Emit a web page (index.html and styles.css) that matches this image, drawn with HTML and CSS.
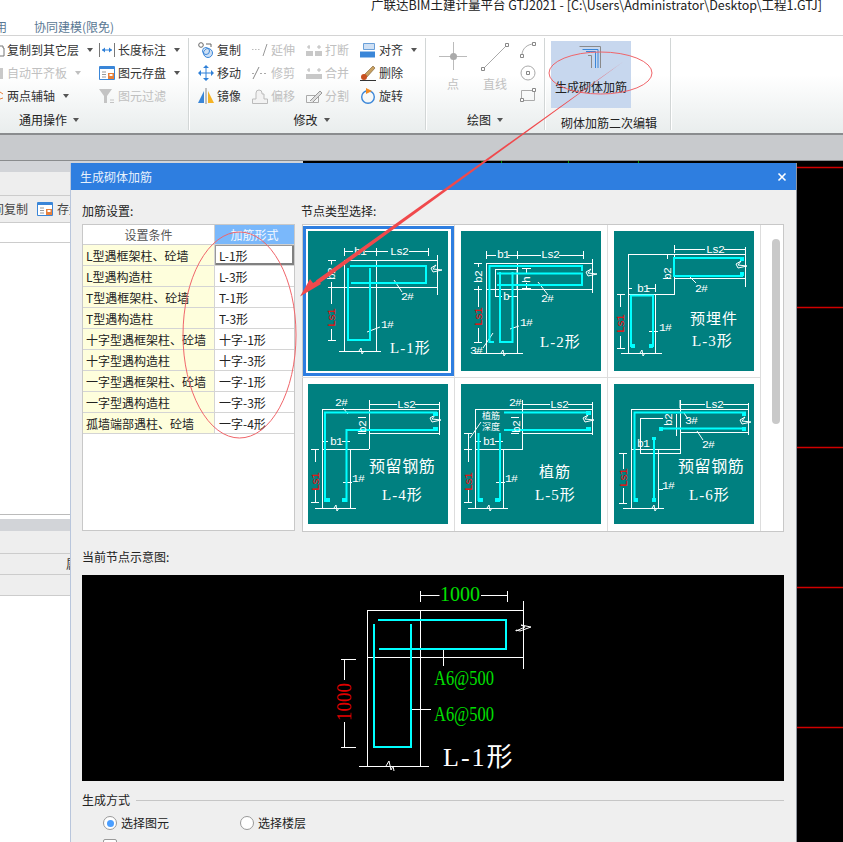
FILE: index.html
```html
<!DOCTYPE html>
<html lang="zh-CN">
<head>
<meta charset="utf-8">
<title>生成砌体加筋</title>
<link rel="stylesheet" href="styles.css">
</head>
<body>
<div class="app">
  <div class="titlebar">广联达BIM土建计量平台 GTJ2021 - [C:\Users\Administrator\Desktop\工程1.GTJ]</div>
  <div class="tabs"><span class="tab-cut">用</span><span>协同建模(限免)</span></div>

  <div class="ribbon">
    <section class="group group-a">
      <div class="tools tools-a">
        <div class="tool"><svg class="ic-cut" viewBox="0 0 5 16"><path d="M0 4h3v2h1v8H0" fill="none" stroke="#777"/></svg><span>复制到其它层</span><i class="caret"></i></div>
        <div class="tool"><svg class="ic" viewBox="0 0 16 16"><path d="M.5 1v14M15.500 1v14" stroke="#777" fill="none"/><path d="M3 8h10" stroke="#2f80d8"/><path d="M3 8l3-2.500v5zM13 8l-3-2.500v5z" fill="#2f80d8"/></svg><span>长度标注</span><i class="caret"></i></div>
        <div class="tool off"><svg class="ic-cut" viewBox="0 0 5 16"><path d="M0 3h3v11H0z" fill="#c9c9c9"/></svg><span>自动平齐板</span><i class="caret caret-off"></i></div>
        <div class="tool"><svg class="ic" viewBox="0 0 16 16"><path d="M.5 1.500h15v13H.5z" fill="#fff" stroke="#3a86d8"/><path d="M1 2h14v2H1z" fill="#3a86d8"/><path d="M3 7h4M3 9.500h4M3 12h4" stroke="#999"/><path d="M9 8h6v6H9z" fill="#e8803a"/><path d="M10.500 9h3v2h-3z" fill="#fff"/></svg><span>图元存盘</span><i class="caret"></i></div>
        <div class="tool"><svg class="ic-cut" viewBox="0 0 5 16"><path d="M0 4l3 2M0 11l3-1" stroke="#e8803a" fill="none"/></svg><span>两点辅轴</span><i class="caret"></i></div>
        <div class="tool off"><svg class="ic" viewBox="0 0 16 16"><path d="M0 1h13L8 8v7H5V8z" fill="#c4c4c4"/><path d="M11 12h4M11 14.500h4" stroke="#c4c4c4"/></svg><span>图元过滤</span></div>
      </div>
      <div class="group-title title-start"><span>通用操作</span><i class="caret"></i></div>
    </section>

    <section class="group group-b">
      <div class="tools tools-b">
        <div class="tool"><svg class="ic" viewBox="0 0 16 16"><circle cx="3" cy="3" r="2.300" fill="#fff" stroke="#666"/><circle cx="10" cy="11" r="4.500" fill="#cfe0f4" stroke="#3a86d8"/><circle cx="8" cy="9" r="3.500" fill="none" stroke="#3a86d8"/><path d="M8 2h5v3" fill="none" stroke="#666"/></svg><span>复制</span></div>
        <div class="tool off"><svg class="ic" viewBox="0 0 16 16"><path d="M0 7.500h1.500M3 7.500h1.500M6 7.500h1.500" stroke="#bbb"/><path d="M11 14l4-12" stroke="#999"/></svg><span>延伸</span></div>
        <div class="tool off"><svg class="ic" viewBox="0 0 16 16"><path d="M0 9h7v5H0zM9 9h7v5H9z" fill="#c8c8c8"/><path d="M3 3v4M13 3v4M1 5h3M11 5h4" stroke="#bbb"/></svg><span>打断</span></div>
        <div class="tool"><svg class="ic" viewBox="0 0 16 16"><path d="M3.500 1.500h11v6h-11z" fill="#cfe0f4" stroke="#6aa0d8"/><path d="M0 9.500h15v6H0z" fill="#3a86d8"/></svg><span>对齐</span><i class="caret"></i></div>

        <div class="tool"><svg class="ic" viewBox="0 0 16 16"><path d="M8 0l3 3H5zM8 16l-3-3h6zM0 8l3-3v6zM16 8l-3 3V5z" fill="#2f80d8"/><path d="M8 3v10M3 8h10" stroke="#2f80d8"/></svg><span>移动</span></div>
        <div class="tool off"><svg class="ic" viewBox="0 0 16 16"><path d="M1 14l6-12" stroke="#888"/><path d="M0 8.500h2M8 8.500h2M12 8.500h2" stroke="#aaa"/></svg><span>修剪</span></div>
        <div class="tool off"><svg class="ic" viewBox="0 0 16 16"><path d="M0 9h16v5H0z" fill="#c8c8c8"/><path d="M3 3v4M13 3v4M1 5h3M11 5h4" stroke="#bbb"/></svg><span>合并</span></div>
        <div class="tool"><svg class="ic" viewBox="0 0 16 16"><path d="M13 1l2 2-8 9-3-2z" fill="#c8a060" stroke="#7a5a30" stroke-width=".6"/><circle cx="4" cy="12" r="3" fill="#c85020"/><path d="M0 15.500h16" stroke="#333"/></svg><span>删除</span></div>

        <div class="tool"><svg class="ic" viewBox="0 0 16 16"><path d="M6 3v12H0z" fill="#3a86d8"/><path d="M10 3v12h6z" fill="#f5b325"/><path d="M8 0v16" stroke="#888"/></svg><span>镜像</span></div>
        <div class="tool off"><svg class="ic" viewBox="0 0 16 16"><path d="M.5 15.500V11H4V5a3 3 0 0 1 6 0v1h2v5h3.500v4.500z" fill="#f2f2f2" stroke="#bbb"/></svg><span>偏移</span></div>
        <div class="tool off"><svg class="ic" viewBox="0 0 16 16"><path d="M.5 7.500h12v7H.5z" fill="none" stroke="#aaa"/><path d="M4 13L14 3l2 2-9 9" fill="#ddd" stroke="#999"/></svg><span>分割</span></div>
        <div class="tool"><svg class="ic" viewBox="0 0 16 16"><circle cx="8" cy="9" r="6.300" fill="none" stroke="#3a86d8" stroke-width="1.400"/><path d="M6 0l6 3-6 3z" fill="#f08a24"/></svg><span>旋转</span></div>
      </div>
      <div class="group-title"><span>修改</span><i class="caret"></i></div>
    </section>

    <section class="group group-c">
      <div class="draw-tools">
        <div class="draw-big off"><svg width="30" height="32" viewBox="0 0 30 32"><path d="M15.500 1v28M1 15.500h28" stroke="#bbb"/><circle cx="15.500" cy="15.500" r="3.500" fill="#aaa"/></svg><span>点</span></div>
        <div class="draw-big off"><svg width="32" height="32" viewBox="0 0 32 32"><path d="M4 28L28 4" stroke="#aaa"/><path d="M2.500 26.500h3v3h-3zM26.500 2.500h3v3h-3z" fill="#fff" stroke="#888"/></svg><span>直线</span></div>
        <div class="draw-small">
          <svg width="16" height="16" viewBox="0 0 16 16"><path d="M2 13C2 7 7 2 14 2" fill="none" stroke="#aaa"/><path d="M.5 12.500h3v3h-3zM12.500.5h3v3h-3z" fill="#fff" stroke="#888"/></svg>
          <svg width="16" height="16" viewBox="0 0 16 16"><circle cx="8" cy="8" r="7" fill="none" stroke="#aaa"/><path d="M6.500 6.500h3v3h-3z" fill="#fff" stroke="#888"/></svg>
          <svg width="16" height="14" viewBox="0 0 16 14"><path d="M1.500 2.500h13v10h-13z" fill="none" stroke="#aaa"/><path d="M.5 10.500h3v3h-3zM12.500.5h3v3h-3z" fill="#fff" stroke="#888"/></svg>
        </div>
      </div>
      <div class="group-title"><span>绘图</span><i class="caret"></i></div>
    </section>

    <section class="group group-d">
      <div class="tools-d">
        <div class="big-btn"><svg width="26" height="26" viewBox="0 0 26 26"><path d="M1.500 2.500h21V24M10 11.500h3.500V24" fill="none" stroke="#8a8a8a"/><path d="M4.500 5.500h15.500V24M8 7.500h9.500V24" fill="none" stroke="#3a86d8"/></svg><span>生成砌体加筋</span></div>
      </div>
      <div class="group-title title-low"><span>砌体加筋二次编辑</span></div>
    </section>
  </div>

  <div class="band"></div>

  <div class="workspace">
    <div class="pane">
      <div class="pane-head"></div>
      <div class="pane-strip"></div>
      <div class="pane-toolbar">
        <span class="pane-copy">间复制</span>
        <svg class="ic" viewBox="0 0 16 16"><path d="M.5 1.500h15v13H.5z" fill="#fff" stroke="#3a86d8"/><path d="M1 2h14v2H1z" fill="#3a86d8"/><path d="M3 7h4M3 9.500h4M3 12h4" stroke="#999"/><path d="M9 8h6v6H9z" fill="#e8803a"/><path d="M10.500 9h3v2h-3z" fill="#fff"/></svg>
        <span>存盘</span>
      </div>
      <div class="pane-input"></div>
      <div class="pane-list"></div>
      <div class="pane-gap"></div>
      <div class="pane-head pane-head-b"></div>
      <div class="pane-row pane-row-first"></div>
      <div class="pane-row"><span>属性</span></div>
      <div class="pane-row"></div>
      <div class="pane-fill"></div>
    </div>
    <div class="canvas">
      <svg class="canvas-art" width="540" height="681" viewBox="303 161 540 681">
        <path d="M797 167.500h46M797 307.500h46M797 447.500h46M797 587.500h46M797 727.500h46" stroke="#d00000" stroke-width="1.500"/>
        <path d="M482 161v2M501.500 161v2M568.500 161v2M638.500 161v2" stroke="#00a000"/>
      </svg>
    </div>
  </div>
</div>

<div class="dialog">
  <div class="dlg-title"><span>生成砌体加筋</span><svg width="10" height="10" viewBox="0 0 10 10"><path d="M1.500 1.500l7 7M8.500 1.500l-7 7" stroke="#fff" stroke-width="1.600"/></svg></div>
  <div class="dlg-body">
    <div class="dlg-upper">
      <div class="col-settings">
        <div class="dlg-label">加筋设置:</div>
        <div class="table-box">
          <table class="rebar-table">
            <colgroup><col class="c1"><col class="c2"></colgroup>
            <thead><tr><th>设置条件</th><th class="th-active">加筋形式</th></tr></thead>
            <tbody>
              <tr><td>L型遇框架柱、砼墙</td><td class="cur">L-1形</td></tr>
              <tr><td>L型遇构造柱</td><td>L-3形</td></tr>
              <tr><td>T型遇框架柱、砼墙</td><td>T-1形</td></tr>
              <tr><td>T型遇构造柱</td><td>T-3形</td></tr>
              <tr><td>十字型遇框架柱、砼墙</td><td>十字-1形</td></tr>
              <tr><td>十字型遇构造柱</td><td>十字-3形</td></tr>
              <tr><td>一字型遇框架柱、砼墙</td><td>一字-1形</td></tr>
              <tr><td>一字型遇构造柱</td><td>一字-3形</td></tr>
              <tr><td>孤墙端部遇柱、砼墙</td><td>一字-4形</td></tr>
            </tbody>
          </table>
        </div>
      </div>
      <div class="col-nodes">
        <div class="dlg-label">节点类型选择:</div>
        <div class="node-panel">
          <div class="node-grid">
            <div class="cell sel"><svg class="thumb" viewBox="0 0 140 140">
              <path class="w" d="M36.500 17v8M68.500 17v8M120.500 17v8M36 20.500h9M57 20.500h23M101 20.500h19M36 29.500h93M21 56.500h108M36.500 29v91M68.500 29v91M129.500 24v40M31 120.500h42M20 29.500h8M20 56.500h8M20 109.500h8M23.500 29.500v4M23.500 51v5M23.500 56v17M23.500 98v11M86 49l8 12M59 101l13-5"/>
              <path class="w" d="M51 120l2-3 1 6 2-3M123 37l5-3-3 4 9 1-9 2z"/>
              <polyline class="b" points="40,37 40,109 62,109 62,37"/><polyline class="b" points="42,35 118,35 118,52 43,52"/>
              <text class="t" x="46" y="24">b1</text><text class="t" x="82" y="24">Ls2</text>
              <text class="t" transform="rotate(-90 27 49)" x="27" y="49">b2</text><text class="t r" transform="rotate(-90 27 96)" x="27" y="96">Ls1</text>
              <text class="t" x="93" y="69">2#</text><text class="t" x="73" y="97">1#</text>
              <text class="cap" x="82" y="122">L-1形</text></svg></div>
            <div class="cell"><svg class="thumb" viewBox="0 0 140 140">
              <path class="w" d="M25.500 20v8M56.500 20v8M122.500 20v8M25 24.500h10M47 24.500h33M98 24.500h24M25 32.500h106M25 58.500h106M25.500 32v90M56.500 32v90M131.500 28v34M13 122.500h49M13 32.500h8M13 58.500h8M13 111.500h8M17.500 32v4M17.500 55v3M17.500 58v18M17.500 97v14M34 38.500h22v20M34.500 38v28M34 65.500h7M47 65.500h9M61 37.500h9M61 57.500h9M65.500 37v6M65.500 52v5M77 51l10 13M49 98l9-3M22 117l10-15"/>
              <path class="w" d="M40 122l2-3 1 6 2-3M125 41l5-3-3 4 9 1-9 2z"/>
              <polyline class="b" points="33,111 28.500,111 28.500,35 121,35 121,40"/><polyline class="b" points="36,42.500 121,42.500 121,54 36,54"/><polyline class="b" points="39,41 39,111 51.500,111 51.500,41"/>
              <text class="t" x="36" y="27">b1</text><text class="t" x="80" y="27">Ls2</text><text class="t" x="42" y="69">b</text>
              <text class="t" transform="rotate(-90 69 52)" x="69" y="52">h</text>
              <text class="t" transform="rotate(-90 21 52)" x="21" y="52">b2</text><text class="t r" transform="rotate(-90 21 95)" x="21" y="95">Ls1</text>
              <text class="t" x="80" y="71">2#</text><text class="t" x="59" y="95">1#</text><text class="t" x="9" y="123">3#</text>
              <text class="cap" x="79" y="116">L-2形</text></svg></div>
            <div class="cell"><svg class="thumb" viewBox="0 0 140 140">
              <path class="w" d="M14 23.500h118M14.500 23v99M60.500 23v40M14 63.500h47M60 47.500h72M41.500 63v59M7 122.500h41M131.500 16v40M60.500 14v8M60 18.500h31M110 18.500h21M50 23.500h6M50 47.500h6M53.500 23v5M53.500 46v2M14.500 53v8M41.500 53v8M14 57.500h4M33 57.500h8M3 63.500h8M3 117.500h8M6.500 63v13M6.500 105v12M74 44l8 8M35 100.500h9"/>
              <path class="w" d="M26 122l2-3 1 6 2-3M122 33l5-3-3 4 9 1-9 2z"/>
              <polyline class="b" points="129,27 60,27 60,45 129,45"/><polyline class="b" points="17,116 17,64.500 39,64.500 39,116"/>
              <path class="sq" d="M126 26h4v4h-4zM126 41h4v4h-4zM17 113h4v4h-4zM35 113h4v4h-4z"/>
              <text class="t" x="92" y="22">Ls2</text><text class="t" x="23" y="61">b1</text>
              <text class="t" transform="rotate(-90 57 49)" x="57" y="49">b2</text><text class="t r" transform="rotate(-90 10 102)" x="10" y="102">Ls1</text>
              <text class="t" x="81" y="61">2#</text><text class="t" x="45" y="100">1#</text>
              <text class="cap" x="76" y="93">预埋件</text><text class="cap" x="78" y="115">L-3形</text></svg></div>
            <div class="cell"><svg class="thumb" viewBox="0 0 140 140">
              <path class="w" d="M14.500 25.500h117M14.500 25v99M7 124.500h41M42.500 65v59M14 65.500h47M61.500 19v46M61 49.500h71M131.500 18v33M61 20.500h28M107 20.500h24M61.500 16v8M35 24l5 6M50 33.500h8M50 49.500h8M54.500 33v1M14 57.500h6M34 57.500h8M3 65.500h8M3 118.500h8M7.500 65v13M7.500 106v13M35 98.500h9"/>
              <path class="w" d="M26 124l2-3 1 6 2-3M122 34l5-3-3 4 9 1-9 2z"/>
              <polyline class="b" points="129,28.500 17,28.500 17,118"/><polyline class="b" points="130,46 38.500,46 38.500,118"/>
              <path class="sq" d="M125 28h5v4h-5zM125 43h5v4h-5zM17 114h5v4h-5zM34 114h5v4h-5z"/>
              <text class="t" x="89" y="24">Ls2</text><text class="t" x="27" y="22">2#</text><text class="t" x="22" y="61">b1</text>
              <text class="t" transform="rotate(-90 58 49)" x="58" y="49">b2</text><text class="t r" transform="rotate(-90 11 107)" x="11" y="107">Ls1</text>
              <text class="t" x="44" y="98">1#</text>
              <text class="cap cap-w" x="61" y="88">预留钢筋</text><text class="cap" x="74" y="116">L-4形</text></svg></div>
            <div class="cell"><svg class="thumb" viewBox="0 0 140 140">
              <path class="w" d="M14.500 25.500h117M14.500 25v99M7 124.500h40M42.500 65v59M14 65.500h48M61.500 19v46M61 49.500h71M131.500 18v33M61 20.500h28M107 20.500h24M61.500 16v8M9 54l11-16M3 49.500h8M7.500 49v16M3 65.500h8M3 118.500h8M7.500 65v13M7.500 106v13M50 33.500h8M50 49.500h8M54.500 33v1M14 57.500h6M34 57.500h8M35 98.500h9"/>
              <path class="w" d="M26 124l2-3 1 6 2-3M122 34l5-3-3 4 9 1-9 2z"/>
              <path class="b" d="M43 28.500h86M43 46h86M17.500 49v68M39 49v68"/>
              <path class="sq" d="M125 27h5v4h-5zM125 43h5v4h-5zM17 114h5v4h-5zM34 114h5v4h-5z"/>
              <text class="t t-s" x="21" y="35">植筋</text><text class="t t-s" x="21" y="46">深度</text>
              <text class="t" x="89" y="24">Ls2</text><text class="t" x="48" y="22">2#</text><text class="t" x="22" y="61">b1</text>
              <text class="t" transform="rotate(-90 59 49)" x="59" y="49">b2</text><text class="t r" transform="rotate(-90 11 107)" x="11" y="107">Ls1</text>
              <text class="t" x="44" y="98">1#</text>
              <text class="cap" x="78" y="93">植筋</text><text class="cap" x="74" y="116">L-5形</text></svg></div>
            <div class="cell"><svg class="thumb" viewBox="0 0 140 140">
              <path class="w" d="M17.500 25.500h117M17.500 25v99M9 124.500h41M44.500 65v59M17 65.500h50M66.500 16v53M26 69.500h41M26.500 34v36M26 34.500h23M66 48.500h69M134.500 19v32M66 20.500h25M109 20.500h25M66 16v8M62.500 30v22M70 29l4 6M83 47l6 9M5 69.500h8M5 119.500h8M9.500 70v15M9.500 104v15M44 105.500h5"/>
              <path class="w" d="M38 124l2-3 1 6 2-3M126 36l5-3-3 4 9 1-9 2z"/>
              <polyline class="b" points="132,28.500 20.500,28.500 20.500,118"/><path class="b" d="M46 44.500h86M40 53v65"/>
              <path class="sq" d="M128 28h4v4h-4zM128 43h4v4h-4zM45 43h4v4h-4zM20 114h4v4h-4zM38 114h4v4h-4zM38 53h4v3h-4z"/>
              <text class="t" x="91" y="24">Ls2</text><text class="t" x="23" y="63">b1</text><text class="t" x="71" y="40">3#</text><text class="t" x="88" y="64">2#</text><text class="t" x="48" y="105">1#</text>
              <text class="t" transform="rotate(-90 58 42)" x="58" y="42">b2</text><text class="t r" transform="rotate(-90 13 103)" x="13" y="103">Ls1</text>
              <text class="cap cap-w" x="64" y="88">预留钢筋</text><text class="cap" x="75" y="116">L-6形</text></svg></div>
          </div>
          <div class="node-scroll"><div class="node-thumb"></div></div>
        </div>
      </div>
    </div>

    <div class="dlg-label dlg-label-b">当前节点示意图:</div>
    <div class="preview">
      <svg class="preview-art" width="702" height="206" viewBox="82 575 702 206">
        <path class="w" d="M420.500 591v11M507.500 591v11M420.500 595.500h19M481 595.500h26M367 610.500h157M367 657.500h157M367.500 610v156M420.500 610v156M523.500 601v68M359 766.500h70M443.500 649v17M412 709.500h19M341 659.500h15M341 747.500h15M344.500 659v21M344.500 722v25"/>
        <path class="w" d="M386 766l3-5 2 9 2-4 1 5M516 631l9-4-4-2 10 2-11 4-4-1z"/>
        <polyline class="b" points="374,624 374,747 411,747 411,624"/><polyline class="b" points="378,620 506,620 506,649 379,649"/>
        <text class="pv-t g" x="440" y="601" textLength="40" lengthAdjust="spacingAndGlyphs">1000</text>
        <text class="pv-t g" x="434" y="685" textLength="60" lengthAdjust="spacingAndGlyphs">A6@500</text>
        <text class="pv-t g" x="434" y="721" textLength="60" lengthAdjust="spacingAndGlyphs">A6@500</text>
        <text class="pv-t rd" transform="rotate(-90 351 721)" x="351" y="721" textLength="38" lengthAdjust="spacingAndGlyphs">1000</text>
        <text class="pv-cap" x="443" y="766">L-1形</text>
      </svg>
    </div>

    <div class="legend"><span>生成方式</span><div class="legend-line"></div></div>
    <div class="radios">
      <label class="radio-item"><i class="radio on"></i><span>选择图元</span></label>
      <label class="radio-item"><i class="radio"></i><span>选择楼层</span></label>
    </div>
    <div class="check-row"><i class="check"></i><span>覆盖同位置砌体加筋</span></div>
  </div>
</div>

<svg class="marks" width="843" height="842" viewBox="0 0 843 842">
  <ellipse cx="600.500" cy="73" rx="51.500" ry="21" class="mark"/>
  <ellipse cx="239.500" cy="335" rx="56.500" ry="103" class="mark"/>
  <path class="arrow" d="M623.500 61.500L316 280.500l2.500 3.500z"/>
  <path class="arrow" d="M300 296.500L310 279l3 4 5-3 3 4z"/>
</svg>
</body>
</html>
```
FILE: styles.css
```css
* { box-sizing: border-box; }
html, body { margin: 0; padding: 0; }
body {
  position: relative;
  width: 843px;
  height: 842px;
  overflow: hidden;
  background: #fff;
  font: 12px/18px "Noto Sans CJK SC", "Noto Sans", sans-serif;
  color: #333;
}
.app { display: flex; flex-direction: column; height: 842px; }

.titlebar {
  height: 18px;
  line-height: 10px;
  padding-right: 21px;
  font-size: 12.5px;
  text-align: right;
  color: #222;
  white-space: nowrap;
  overflow: hidden;
  flex: none;
}
.tabs {
  height: 18px;
  display: flex;
  gap: 27px;
  border-bottom: 1px solid #d4d4d4;
  color: #5a7894;
  line-height: 18px;
  flex: none;
}
.tab-cut { margin-left: -5px; }

.ribbon {
  height: 99px;
  flex: none;
  display: flex;
  padding-top: 2px;
  background: linear-gradient(#fff 40%, #e9eded);
  border-bottom: 2px solid #8a8c8e;
}
.group {
  height: 92px;
  display: flex;
  flex-direction: column;
  border-right: 1px solid #d2d6d6;
  box-shadow: 1px 0 0 #fff;
}
.group-a { width: 189px; }
.group-b { width: 237px; padding-left: 9px; }
.group-c { width: 119px; }
.group-d { width: 126px; }
.tools { height: 69px; display: grid; grid-auto-rows: 23px; }
.tools-a { grid-template-columns: 99px 1fr; }
.tools-b { grid-template-columns: repeat(4, 54px); }
.tool { display: flex; align-items: center; gap: 3px; white-space: nowrap; }
.off { color: #c0c0c0; }
.ic { width: 16px; height: 16px; flex: none; }
.ic-cut { width: 5px; height: 16px; flex: none; margin-right: -1px; }
.caret {
  width: 0;
  height: 0;
  margin-left: 5px;
  border: 3px solid transparent;
  border-top: 4px solid #555;
  border-bottom: 0;
  flex: none;
}
.caret-off { border-top-color: #c0c0c0; }
.group-title {
  height: 18px;
  margin-top: 4px;
  display: flex;
  justify-content: center;
  align-items: center;
  gap: 1px;
  color: #222;
}
.title-start { justify-content: flex-start; padding-left: 19px; }
.title-low { margin-top: 7px; padding-left: 3px; }

.draw-tools { height: 69px; display: flex; padding-left: 6px; }
.draw-big {
  width: 42px;
  padding-top: 3px;
  display: flex;
  flex-direction: column;
  align-items: center;
  gap: 2px;
}
.draw-small {
  padding: 4px 0 0 4px;
  display: flex;
  flex-direction: column;
  gap: 7px;
}
.tools-d { height: 69px; padding: 3px 0 0 6px; }
.big-btn {
  width: 80px;
  height: 67px;
  background: #c7d7ee;
  display: flex;
  flex-direction: column;
  align-items: center;
  padding-top: 3px;
  gap: 8px;
  color: #222;
}

.band {
  height: 26px;
  flex: none;
  background: #c8cacd;
  border-bottom: 1px solid #8a8c8e;
}
.workspace { flex: 1; display: flex; min-height: 0; }
.pane { width: 303px; flex: none; display: flex; flex-direction: column; background: #fff; }
.pane-head { height: 11px; background: #d2d4d8; flex: none; }
.pane-head-b { height: 12px; }
.pane-strip { height: 24px; background: #eee; border-bottom: 1px solid #ccc; flex: none; }
.pane-toolbar {
  height: 27px;
  background: #eee;
  border-bottom: 1px solid #ccc;
  display: flex;
  align-items: center;
  gap: 4px;
  flex: none;
  overflow: hidden;
  color: #444;
}
.pane-copy { width: 41px; margin-left: -8px; flex: none; white-space: nowrap; }
.pane-input { height: 20px; border-bottom: 1px solid #ccc; flex: none; }
.pane-list { height: 272px; border-bottom: 1px solid #bbb; flex: none; }
.pane-gap { height: 4px; flex: none; }
.pane-row {
  height: 21px;
  background: #eee;
  border-bottom: 1px solid #ccc;
  flex: none;
  padding-left: 66px;
  overflow: hidden;
  white-space: nowrap;
  line-height: 20px;
}
.pane-row-first { height: 23px; }
.pane-fill { flex: 1; }
.canvas { flex: 1; background: #000; position: relative; overflow: hidden; }
.canvas-art { position: absolute; left: 0; top: 0; display: block; }

.dialog {
  position: absolute;
  left: 70px;
  top: 163px;
  width: 727px;
  height: 679px;
  overflow: hidden;
  background: #efefef;
  border-left: 1px solid #b9c6dc;
  border-right: 1px solid #8f949c;
  color: #222;
}
.dlg-title {
  height: 27px;
  background: #2e7ee0;
  color: #e8f1fc;
  display: flex;
  align-items: center;
  justify-content: space-between;
  padding: 0 9px 0 9px;
}
.dlg-body { padding: 12px 12px 0 11px; }
.dlg-upper { display: flex; gap: 6px; }
.col-settings { width: 213px; flex: none; }
.col-nodes { flex: 1; min-width: 0; }
.dlg-label { height: 18px; margin-bottom: 4px; white-space: nowrap; }
.table-box {
  height: 307px;
  margin-top: 1px;
  background: #fff;
  border: 1px solid #c8c8c8;
}
.rebar-table {
  width: 211px;
  table-layout: fixed;
  border-collapse: separate;
  border-spacing: 0;
}
.c1 { width: 132px; }
.c2 { width: 79px; }
.rebar-table th {
  height: 20px;
  padding: 1px 0 0;
  font-weight: 400;
  color: #555;
  background: #fff;
  border-right: 1px solid #d0d0d0;
  border-bottom: 1px solid #d0d0d0;
}
.rebar-table th.th-active { background: #7ab8fb; color: #f4f9ff; border-right: 0; }
.rebar-table td {
  height: 21px;
  padding: 1px 0 0 4px;
  line-height: 19px;
  background: #fff;
  color: #222;
  border-bottom: 1px solid #d4d4d4;
  white-space: nowrap;
  overflow: hidden;
}
.rebar-table td:first-child {
  padding-left: 3px;
  background: #fefedc;
  border-right: 1px solid #d4d4d4;
}
.rebar-table td.cur { box-shadow: inset 1px 1px 0 #999, inset -2px -2px 0 #808080; }

.node-panel {
  margin-left: 1px;
  height: 308px;
  display: flex;
  background: #fff;
  border: 1px solid #c8c8c8;
}
.node-grid {
  width: 459px;
  margin-left: -1px;
  flex: none;
  display: grid;
  grid-template-columns: repeat(3, 153px);
  grid-template-rows: 153px 153px;
}
.cell {
  position: relative;
  padding: 6px 0 0 6px;
  border-right: 1px solid #ddd;
  border-bottom: 1px solid #ddd;
}
.cell:nth-child(n+4) { border-bottom: 0; }
.sel::after {
  content: "";
  position: absolute;
  left: 1px;
  top: 1px;
  right: 0;
  bottom: 1px;
  border: 3px solid #2e7ee0;
}
.thumb { display: block; width: 140px; height: 140px; background: #008080; }
.w { fill: none; stroke: #fff; stroke-width: 1; }
.b { fill: none; stroke: #0ff; stroke-width: 2; }
.sq { fill: #0ff; }
.t { font: 11.5px "Liberation Mono", monospace; fill: #fff; letter-spacing: -.9px; }
.t-s { font: 9px "Noto Sans CJK SC", sans-serif; letter-spacing: 0; }
.r { fill: #f00; }
.cap { font: 15px "Liberation Serif", "Noto Sans CJK SC", serif; fill: #fff; letter-spacing: 1px; }
.cap-w { font-size: 16px; letter-spacing: .6px; }
.node-scroll { flex: 1; padding: 14px 0 0 11px; }
.node-thumb { width: 8px; height: 185px; border-radius: 4px; background: #c9c9c9; }

.dlg-label-b { margin: 16px 0 9px; }
.preview { height: 206px; background: #000; }
.preview-art { display: block; }
.pv-t { font: 20px "Liberation Serif", serif; }
.g { fill: #00e000; }
.rd { fill: #e00000; }
.pv-cap { font: 26px "Liberation Serif", "Noto Sans CJK SC", serif; fill: #fff; letter-spacing: 2px; }

.legend { margin-top: 10px; height: 18px; display: flex; align-items: center; gap: 6px; }
.legend-line { flex: 1; height: 1px; background: #c6c6c6; }
.radios { margin-top: 5px; padding-left: 21px; display: flex; gap: 71px; }
.radio-item { display: flex; align-items: center; gap: 4px; }
.radio {
  width: 14px;
  height: 14px;
  border: 1px solid #999;
  border-radius: 50%;
  background: #fff;
  display: flex;
  align-items: center;
  justify-content: center;
}
.radio.on::after {
  content: "";
  width: 7px;
  height: 7px;
  border-radius: 50%;
  background: #4a9eff;
}
.check-row { margin-top: 7px; padding-left: 21px; display: flex; align-items: flex-start; gap: 4px; line-height: 18px; }
.check { width: 14px; height: 14px; background: #fff; border: 1px solid #999; border-radius: 2px; }

.marks { position: absolute; left: 0; top: 0; pointer-events: none; }
.mark { fill: none; stroke: #f0656a; stroke-width: 1; }
.arrow { fill: #f0494c; }
```
